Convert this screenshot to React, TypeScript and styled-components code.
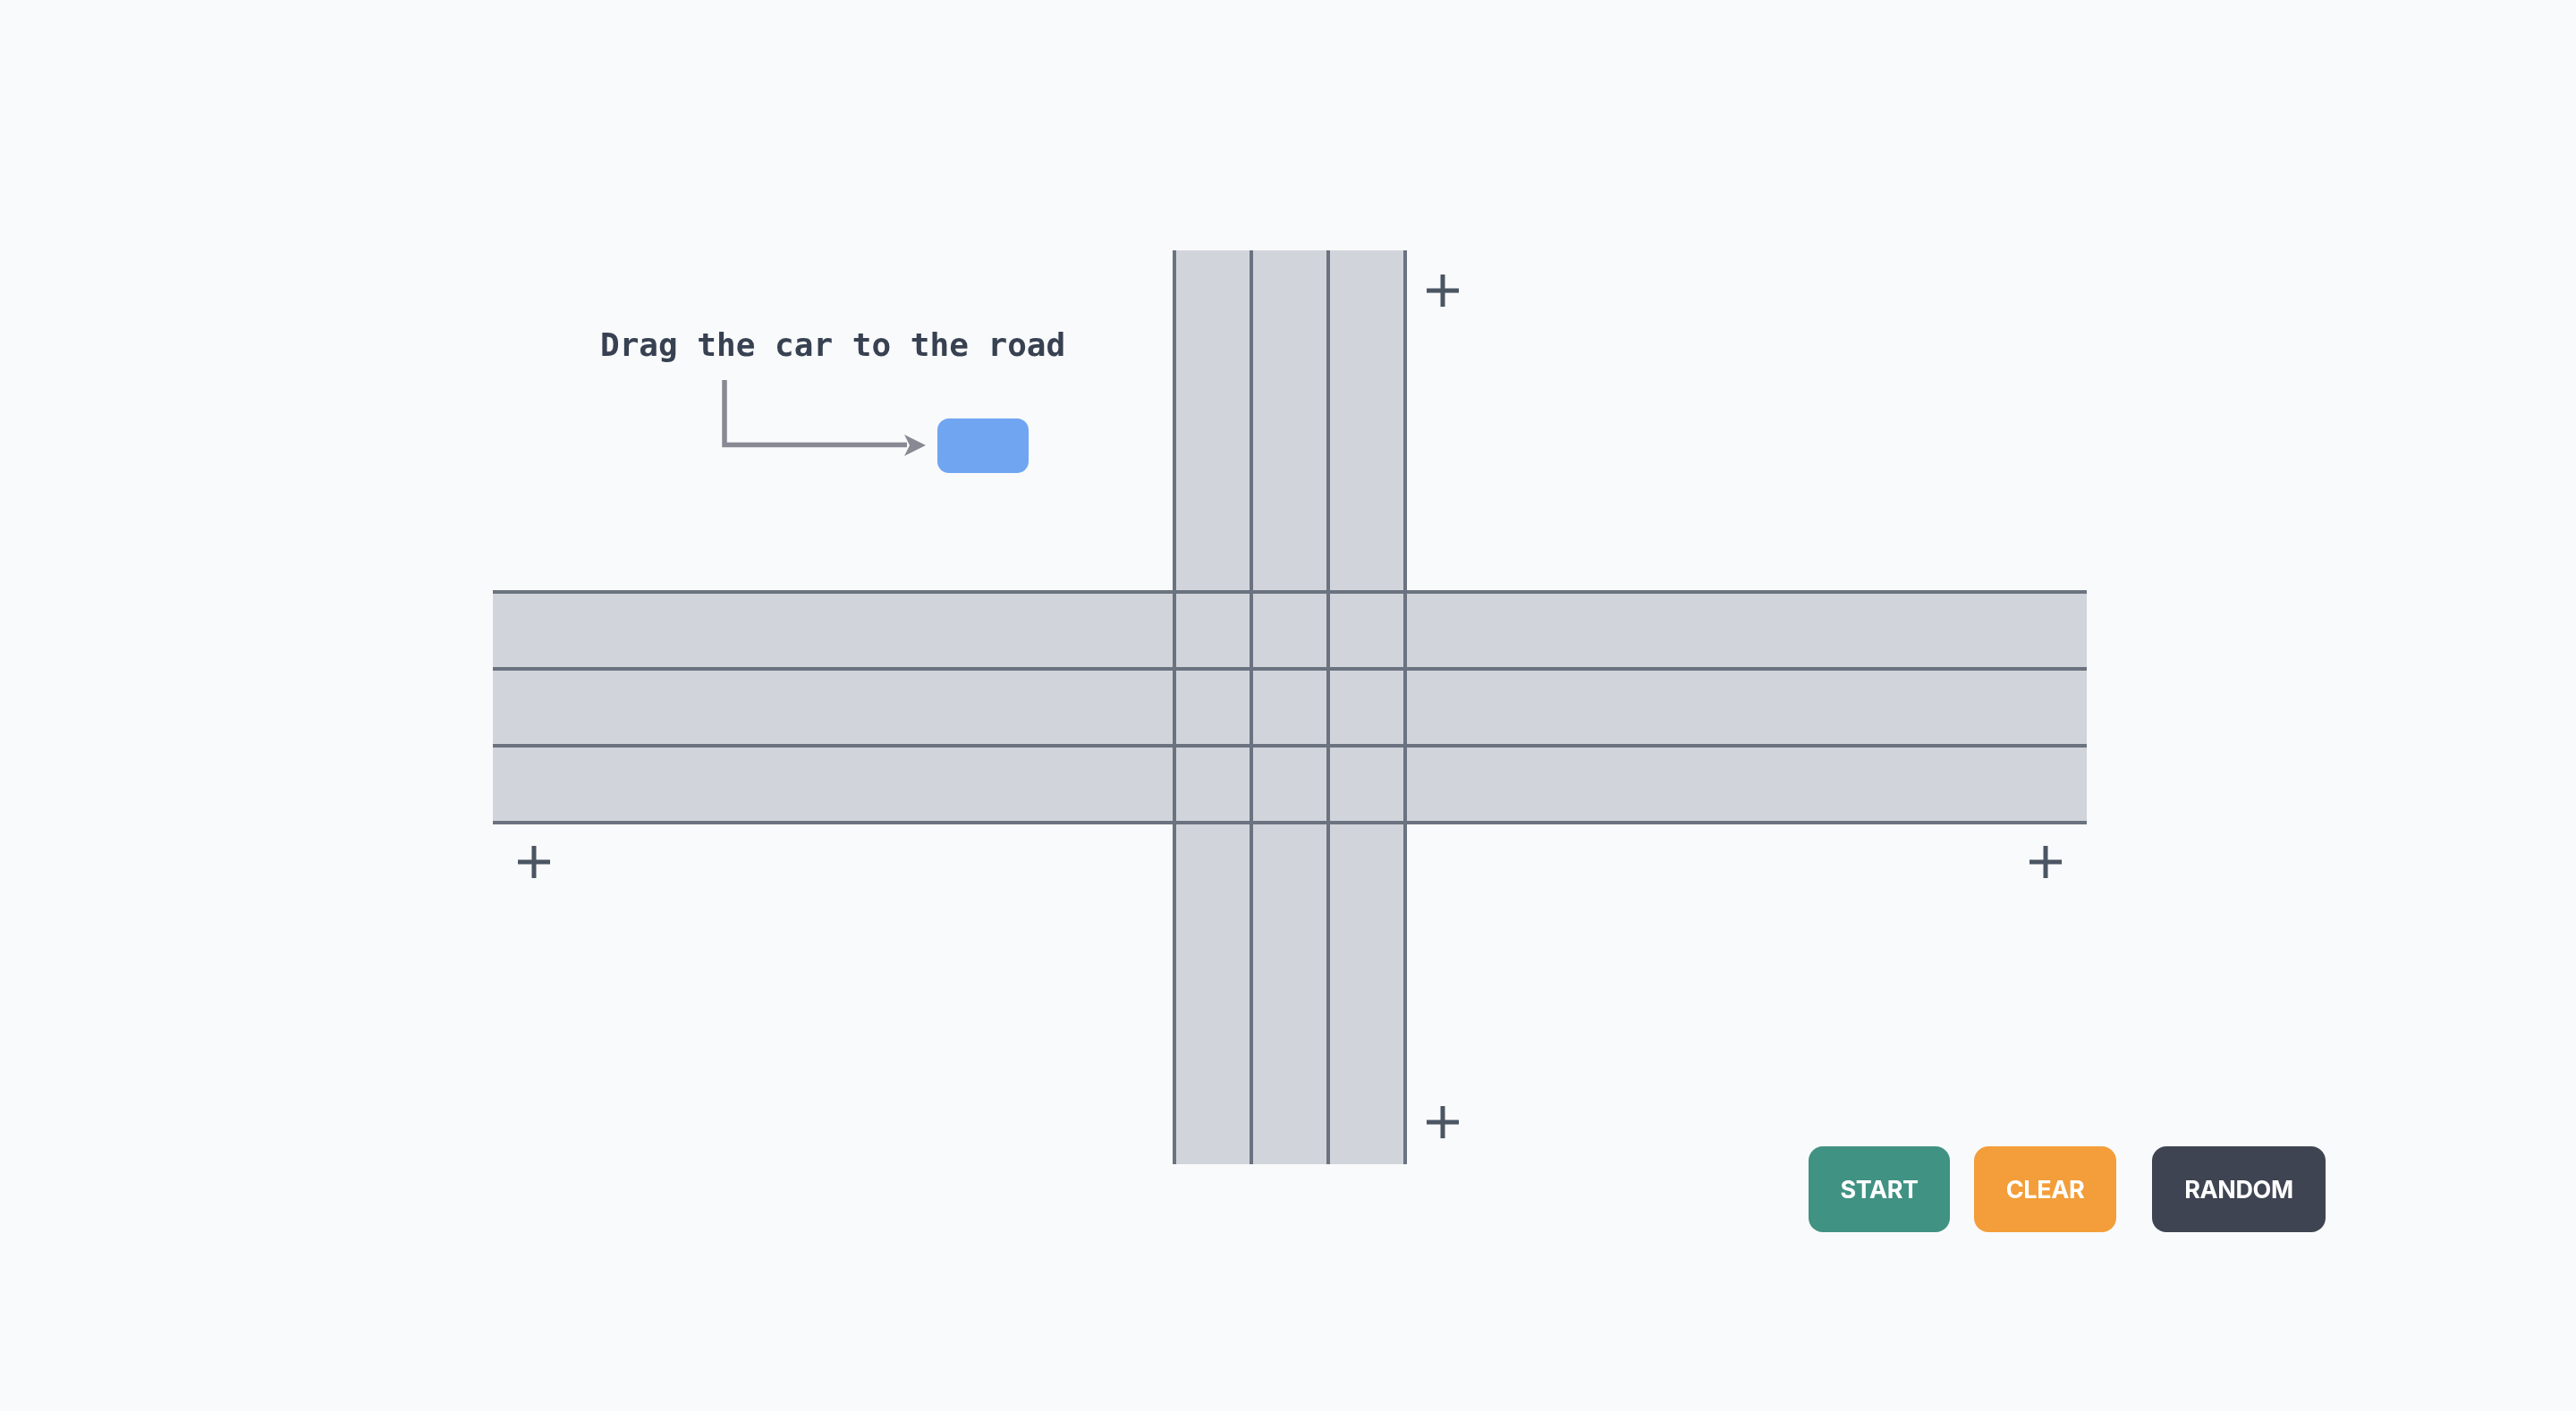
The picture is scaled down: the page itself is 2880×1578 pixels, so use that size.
import React from "react";
import styled, { createGlobalStyle } from "styled-components";

const GlobalStyle = createGlobalStyle`
  html, body {
    margin: 0;
    padding: 0;
    background: #f9fafb;
  }
  body {
    font-family: "Inter", "Noto Sans", sans-serif;
  }
  * { box-sizing: border-box; }
`;

const Page = styled.div`
  display: grid;
  grid-template: 1fr / 1fr;
  width: 100%;
  height: 100vh;
  padding: 4px 0 0 4px;
  background: #f9fafb;
  overflow: hidden;
`;

const Intersection = styled.div`
  grid-area: 1 / 1;
  place-self: center;
  display: grid;
  grid-template-columns: 760px 262px 760px;
  grid-template-rows: 380px 262px 380px;
`;

type Axis = "v" | "h";

const Road = styled.div<{ $axis: Axis }>`
  display: flex;
  flex-direction: ${(p) => (p.$axis === "v" ? "row" : "column")};
  background: #d1d5db;
  ${(p) =>
    p.$axis === "v"
      ? `grid-column: 2; grid-row: 1 / span 3;`
      : `grid-column: 1 / span 3; grid-row: 2; mix-blend-mode: darken;`}
`;

const LaneLine = styled.div`
  flex: 0 0 4px;
  background: #6b7280;
`;

const Lane = styled.div`
  flex: 1 1 0;
`;

const SpawnButton = styled.button<{
  $row: number;
  $col: number;
  $justify: "start" | "end";
  $align: "start" | "end";
  $margin: string;
}>`
  grid-row: ${(p) => p.$row};
  grid-column: ${(p) => p.$col};
  justify-self: ${(p) => p.$justify};
  align-self: ${(p) => p.$align};
  margin: ${(p) => p.$margin};
  width: 36px;
  height: 36px;
  padding: 0;
  border: none;
  background: transparent;
  display: flex;
  cursor: pointer;
  z-index: 1;
`;

const PlusIcon = () => (
  <svg width="36" height="36" viewBox="0 0 36 36" aria-hidden="true">
    <path d="M18 0V36M0 18H36" stroke="#4b5563" strokeWidth="5" fill="none" />
  </svg>
);

const Hint = styled.div`
  grid-row: 1;
  grid-column: 1;
  justify-self: start;
  align-self: start;
  margin: 85px 0 0 120px;
  display: flex;
  flex-direction: column;
`;

const HintText = styled.div`
  font-family: "DejaVu Sans Mono", "Liberation Mono", monospace;
  font-weight: 700;
  font-size: 36px;
  line-height: 42px;
  color: #374151;
  white-space: nowrap;
`;

const HintRow = styled.div`
  display: flex;
  align-items: flex-start;
  margin: 18px 0 0 129px;
  gap: 8px;
`;

const Car = styled.div`
  width: 102px;
  height: 61px;
  margin-top: 43px;
  border-radius: 13px;
  background: #70a5f2;
  cursor: grab;
`;

const HintArrow = () => (
  <svg width="240" height="90" viewBox="0 0 240 90" aria-hidden="true">
    <path
      d="M10 0V72.5H214"
      stroke="#878a93"
      strokeWidth="5.5"
      fill="none"
      strokeLinejoin="miter"
    />
    <path d="M211 61L235 73L211 85L217 73Z" fill="#878a93" />
  </svg>
);

const Toolbar = styled.div`
  grid-area: 1 / 1;
  justify-self: end;
  align-self: end;
  margin: 0 280px 200px 0;
  display: flex;
  align-items: center;
`;

type Tone = "start" | "clear" | "random";

const toneColor: Record<Tone, string> = {
  start: "#409283",
  clear: "#f39e3a",
  random: "#3e4451",
};

const ActionButton = styled.button<{ $tone: Tone; $gap: number; $width: number }>`
  width: ${(p) => p.$width}px;
  height: 96px;
  padding: 0;
  margin-left: ${(p) => p.$gap}px;
  border: none;
  border-radius: 16px;
  background: ${(p) => toneColor[p.$tone]};
  color: #ffffff;
  font-family: "Inter", "Noto Sans", sans-serif;
  font-weight: 700;
  font-size: 27px;
  line-height: 1;
  letter-spacing: -0.4px;
  text-align: center;
  cursor: pointer;
`;

const RoadLanes = ({ axis }: { axis: Axis }) => (
  <Road $axis={axis}>
    <LaneLine />
    <Lane />
    <LaneLine />
    <Lane />
    <LaneLine />
    <Lane />
    <LaneLine />
  </Road>
);

export default function App() {
  return (
    <>
      <GlobalStyle />
      <Page>
        <Intersection>
          <RoadLanes axis="v" />
          <RoadLanes axis="h" />
          <SpawnButton $row={1} $col={3} $justify="start" $align="start" $margin="27px 0 0 22px" aria-label="Add car">
            <PlusIcon />
          </SpawnButton>
          <SpawnButton $row={3} $col={3} $justify="start" $align="end" $margin="0 0 29px 22px" aria-label="Add car">
            <PlusIcon />
          </SpawnButton>
          <SpawnButton $row={3} $col={3} $justify="end" $align="start" $margin="24px 28px 0 0" aria-label="Add car">
            <PlusIcon />
          </SpawnButton>
          <SpawnButton $row={3} $col={1} $justify="start" $align="start" $margin="24px 0 0 28px" aria-label="Add car">
            <PlusIcon />
          </SpawnButton>
          <Hint>
            <HintText>Drag the car to the road</HintText>
            <HintRow>
              <HintArrow />
              <Car />
            </HintRow>
          </Hint>
        </Intersection>
        <Toolbar>
          <ActionButton $tone="start" $gap={0} $width={158}>START</ActionButton>
          <ActionButton $tone="clear" $gap={27} $width={159}>CLEAR</ActionButton>
          <ActionButton $tone="random" $gap={40} $width={194}>RANDOM</ActionButton>
        </Toolbar>
      </Page>
    </>
  );
}
